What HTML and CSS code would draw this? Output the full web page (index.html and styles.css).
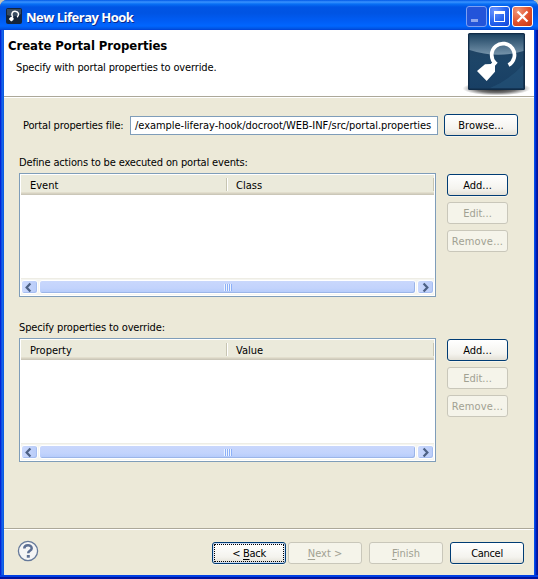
FILE: index.html
```html
<!DOCTYPE html>
<html lang="en">
<head>
<meta charset="utf-8">
<title>New Liferay Hook</title>
<link rel="stylesheet" href="styles.css">
</head>
<body>
<svg width="0" height="0" class="defs" aria-hidden="true">
  <defs>
    <linearGradient id="tile" x1="0" y1="0" x2="0" y2="1">
      <stop offset="0" stop-color="#23425f"/><stop offset=".5" stop-color="#1d4568"/><stop offset="1" stop-color="#183f64"/>
    </linearGradient>
    <linearGradient id="gloss" x1="0" y1="0" x2="0" y2="1">
      <stop offset="0" stop-color="#1f4564"/><stop offset="1" stop-color="#7593aa"/>
    </linearGradient>
    <radialGradient id="shade"><stop offset="0" stop-color="#000" stop-opacity=".9"/><stop offset=".6" stop-color="#000" stop-opacity=".55"/><stop offset="1" stop-color="#000" stop-opacity="0"/></radialGradient>
    <symbol id="left" viewBox="0 0 16 16"><path d="M9.5 3.8 5.5 8l4 4.2" fill="none" stroke="#4d6185" stroke-width="2.4"/></symbol>
    <symbol id="right" viewBox="0 0 16 16"><path d="m6.5 3.8 4 4.2-4 4.2" fill="none" stroke="#4d6185" stroke-width="2.4"/></symbol>
  </defs>
</svg>
<div class="window">
  <header class="titlebar">
    <svg class="app-icon" width="16" height="16" viewBox="0 0 16 16"><rect width="16" height="16" rx="2" fill="#14253b"/><path d="M1 1h14v5Q9 10 1 7z" fill="#53687c" opacity=".6"/><path d="M6.800 9C4.800 6.500 6 3.200 9 3.200c3.400 0 4.800 3.600 2.200 6" fill="none" stroke="#fff" stroke-width="1.500"/><path d="m6.200 8.600 1.500 1.600-.3 1.700-2.200 1.700L2.800 11l1.600-1.800z" fill="#fff"/></svg>
    <h1 class="caption">New Liferay Hook</h1>
    <div class="controls">
      <span class="ctl min"><svg width="21" height="21"><path d="M5 13h7v3H5z" fill="#8ea6ed"/></svg></span>
      <span class="ctl max"><svg width="21" height="21"><path d="M5 5h11v11H5zM6 8v7h9V8z" fill="#fff" fill-rule="evenodd"/></svg></span>
      <span class="ctl close"><svg width="21" height="21"><path d="m5.500 5.500 10 10m0-10-10 10" stroke="#fff" stroke-width="2.300"/></svg></span>
    </div>
  </header>
  <section class="banner">
    <div class="heading">
      <h2 class="t-head">Create Portal Properties</h2>
      <p class="t-sub">Specify with portal properties to override.</p>
    </div>
    <svg class="logo" width="70" height="66" viewBox="0 0 70 66">
      <ellipse cx="33.500" cy="58.500" rx="34" ry="7" fill="url(#shade)"/>
      <rect x="5" y="3" width="57" height="57" rx="1.500" fill="#102c48"/>
      <rect x="6.500" y="4.500" width="54" height="54" fill="url(#tile)"/>
      <path d="M6.500 4.500h54V21Q34 29 6.500 20z" fill="url(#gloss)"/>
      <path d="M27 58Q46 50 60 35v23z" fill="#2b5c81" opacity=".45"/>
      <path d="M32 33A11.400 11.400 0 1 1 45.500 35" fill="none" stroke="#fff" stroke-width="3.700"/>
      <path d="m31.300 30 3.400 2.700-2.700 3v6L23.700 51 14 41l8-6.700 5.700-.3 1.500-1.500-1.500-2.500z" fill="#fff"/>
    </svg>
  </section>
  <main class="page">
    <div class="file-row">
      <label class="t-file">Portal properties file:</label>
      <div class="field"><span class="t-path">/example-liferay-hook/docroot/WEB-INF/src/portal.properties</span></div>
      <button class="btn wide"><span class="t-browse">Browse...</span></button>
    </div>
    <section class="group">
      <p class="group-label t-define">Define actions to be executed on portal events:</p>
      <div class="group-body">
        <div class="table">
          <div class="thead"><span class="th t-event">Event</span><span class="th t-class">Class</span></div>
          <div class="tbody"></div>
          <div class="scroll"><span class="arrow"><svg width="16" height="15"><use href="#left"/></svg></span><span class="thumb"><i class="grip"></i></span><span class="arrow"><svg width="16" height="15"><use href="#right"/></svg></span></div>
        </div>
        <div class="actions">
          <button class="btn"><span class="t-add">Add...</span></button>
          <button class="btn" disabled><span class="t-edit">Edit...</span></button>
          <button class="btn" disabled><span class="t-remove">Remove...</span></button>
        </div>
      </div>
    </section>
    <section class="group">
      <p class="group-label t-specify">Specify properties to override:</p>
      <div class="group-body">
        <div class="table">
          <div class="thead"><span class="th t-prop">Property</span><span class="th t-value">Value</span></div>
          <div class="tbody"></div>
          <div class="scroll"><span class="arrow"><svg width="16" height="15"><use href="#left"/></svg></span><span class="thumb"><i class="grip"></i></span><span class="arrow"><svg width="16" height="15"><use href="#right"/></svg></span></div>
        </div>
        <div class="actions">
          <button class="btn"><span class="t-add">Add...</span></button>
          <button class="btn" disabled><span class="t-edit">Edit...</span></button>
          <button class="btn" disabled><span class="t-remove">Remove...</span></button>
        </div>
      </div>
    </section>
  </main>
  <footer class="footer">
    <svg class="help" width="22" height="22" viewBox="0 0 22 22"><circle cx="11" cy="11" r="9.600" fill="#f5f5f5" stroke="#65799a" stroke-width="1.300"/><path d="M7.300 8.500c0-4.500 7.400-4.300 7.400-.3 0 2.700-3.500 2.500-3.500 5" fill="none" stroke="#5c6f93" stroke-width="2.500"/><path d="M9.800 15h3v2.700h-3z" fill="#5c6f93"/></svg>
    <div class="nav">
      <button class="btn wide focus"><span class="t-back">&lt; <u>B</u>ack</span></button>
      <button class="btn wide" disabled><span class="t-next"><u>N</u>ext &gt;</span></button>
    </div>
    <button class="btn wide" disabled><span class="t-finish"><u>F</u>inish</span></button>
    <button class="btn wide"><span class="t-cancel">Cancel</span></button>
  </footer>
</div>
</body>
</html>
```
FILE: styles.css
```css
* { box-sizing: border-box; }
body { margin: 0; background: #c9c6b8; font: 11px/14px "DejaVu Sans Condensed", "DejaVu Sans", sans-serif; font-stretch: condensed; color: #000; overflow: hidden; }
h1, h2, p { margin: 0; font-weight: normal; white-space: nowrap; }
.defs { position: absolute; }
.window { width: 538px; height: 579px; display: flex; flex-direction: column; padding: 0 4px 4px; border-radius: 7px 7px 0 0; background: linear-gradient(90deg, #0019cf 0, #0831d9 1px, #166aee 2px, #0855dd 4px, #0855dd 534px, #0048f0 535px, #001dbf 536px, #00138c 538px); box-shadow: inset 0 -2px #0013a0, inset 0 -4px #0040e4; }
.titlebar { height: 30px; flex: none; margin: 0 -4px; padding: 6px 5px 0 6px; display: flex; border-radius: 7px 7px 0 0; background: linear-gradient(#0058e6 0, #3a93ff 2px, #0870f5 4px, #0055e5 7px, #0054e3 13px, #005df5 21px, #0066ff 26px, #0052df 29px, #003dd7 30px); }
.app-icon { margin: 2px 4px 0 0; }
.caption { flex: 1; font: bold 13px/20px "Open Sans", "DejaVu Sans Condensed", sans-serif; color: #fff; text-shadow: 1px 1px #0a2a8c; margin-top: 1px; letter-spacing: -.5px; }
.controls { display: flex; gap: 2px; }
.ctl { width: 21px; height: 21px; border: 1px solid #fff; border-radius: 3px; background: radial-gradient(circle at 25% 20%, #6b94ff, #2563ee 55%, #1144d8); display: flex; }
.ctl svg { margin: -1px; flex: none; }
.min { border-color: #7d9ff2; background: #2354d9; }
.close { background: radial-gradient(circle at 25% 20%, #f09678, #e0502c 55%, #c53712); }
.banner { height: 67px; flex: none; display: flex; justify-content: space-between; background: #fff; border-bottom: 1px solid #aca899; }
.heading { padding: 8px 0 0 4px; }
.t-head { font: bold 13px/15px "DejaVu Sans Condensed", "DejaVu Sans", sans-serif; font-stretch: condensed; letter-spacing: -.06px; }
.t-sub { margin: 8px 0 0 8px; letter-spacing: -.14px; }
.t-file { letter-spacing: -.13px; }
.t-path { letter-spacing: -.04px; }
.t-define { letter-spacing: -.15px; }
.t-specify { letter-spacing: -.14px; }
.t-remove { letter-spacing: .2px; }
.t-back, .t-cancel { letter-spacing: -.3px; }
.logo { margin-right: 1px; }
.page { flex: 1; background: #ece9d8; border-top: 1px solid #fff; padding: 16px 16px 0 15px; }
.file-row { height: 22px; display: flex; align-items: center; }
.file-row label { width: 107px; margin-left: 4px; padding-top: 2px; white-space: nowrap; }
.field { width: 308px; height: 19px; margin-right: 6px; border: 1px solid #7f9db9; background: #fff; padding: 2px 4px; white-space: nowrap; }
.group { height: 165px; }
.file-row + .group { margin-top: 19px; }
.group-label { height: 18px; padding-top: 1px; line-height: 14px; }
.group-body { display: flex; gap: 11px; }
.table { width: 417px; height: 124px; border: 1px solid #7f9db9; background: #fff; padding: 1px; display: flex; flex-direction: column; }
.thead { height: 20px; display: flex; background: #ebeadb; box-shadow: inset 0 -1px #cbc7b8, inset 0 -2px #d6d2c2, inset 0 -3px #e2decd; }
.th { width: 207px; height: 13px; line-height: 15px; margin-top: 3px; padding-left: 9px; border-right: 1px solid #c7c5b2; box-shadow: 1px 0 #fff; }
.th:first-child { width: 206px; }
.tbody { flex: 1; }
.scroll { height: 17px; display: flex; gap: 1px; padding: 1px 0; border-top: 1px solid #eeede5; background: #f5f5f0; }
.arrow { width: 17px; border: 1px solid #fff; border-radius: 3px; background: linear-gradient(90deg, #cbd9fd, #b9ccf8); box-shadow: inset -1px -1px #a5bdf0; display: flex; }
.arrow svg { margin: -1px; flex: none; }
.thumb { flex: 1; border: 1px solid #fff; border-radius: 3px; background: linear-gradient(#c9d7fc, #c2d3fc 60%, #b3cafa); box-shadow: inset -1px -1px #9bb5e8; display: flex; align-items: center; justify-content: center; }
.grip { width: 8px; height: 7px; background: repeating-linear-gradient(90deg, #eef4fe 0 1px, #8cb0f8 1px 2px); }
.actions { display: flex; flex-direction: column; gap: 6px; padding: 0; }
.btn { width: 63px; height: 22px; flex: none; padding: 2px 0 0; margin: 0 -1px; border: 1px solid #003c74; border-radius: 3px; background: linear-gradient(#fff, #f4f3ee 70%, #e3e0d6); font: inherit; color: #000; line-height: 14px; box-shadow: 0 1px #f7f5eb; white-space: nowrap; }
.actions .btn { width: 61px; margin: 1px 0 -1px; }
.btn:disabled { border-color: #c9c7ba; background: #f5f4ea; color: #a1a192; box-shadow: none; }
.wide { width: 74px; margin: 0; }
.focus { border-color: #003c74; box-shadow: inset 0 0 0 1px #cfdcf2, 0 1px #f7f5eb; outline: 1px dotted #000; outline-offset: -3px; }
.footer { height: 47px; flex: none; display: flex; gap: 7px; border-top: 1px solid #aca899; background: #ece9d8; box-shadow: inset 0 1px #fff; padding: 13px 10px 0 13px; }
.help { margin-top: -2px; }
.nav { display: flex; gap: 2px; margin-left: auto; }
u { text-underline-offset: 2px; }
```
